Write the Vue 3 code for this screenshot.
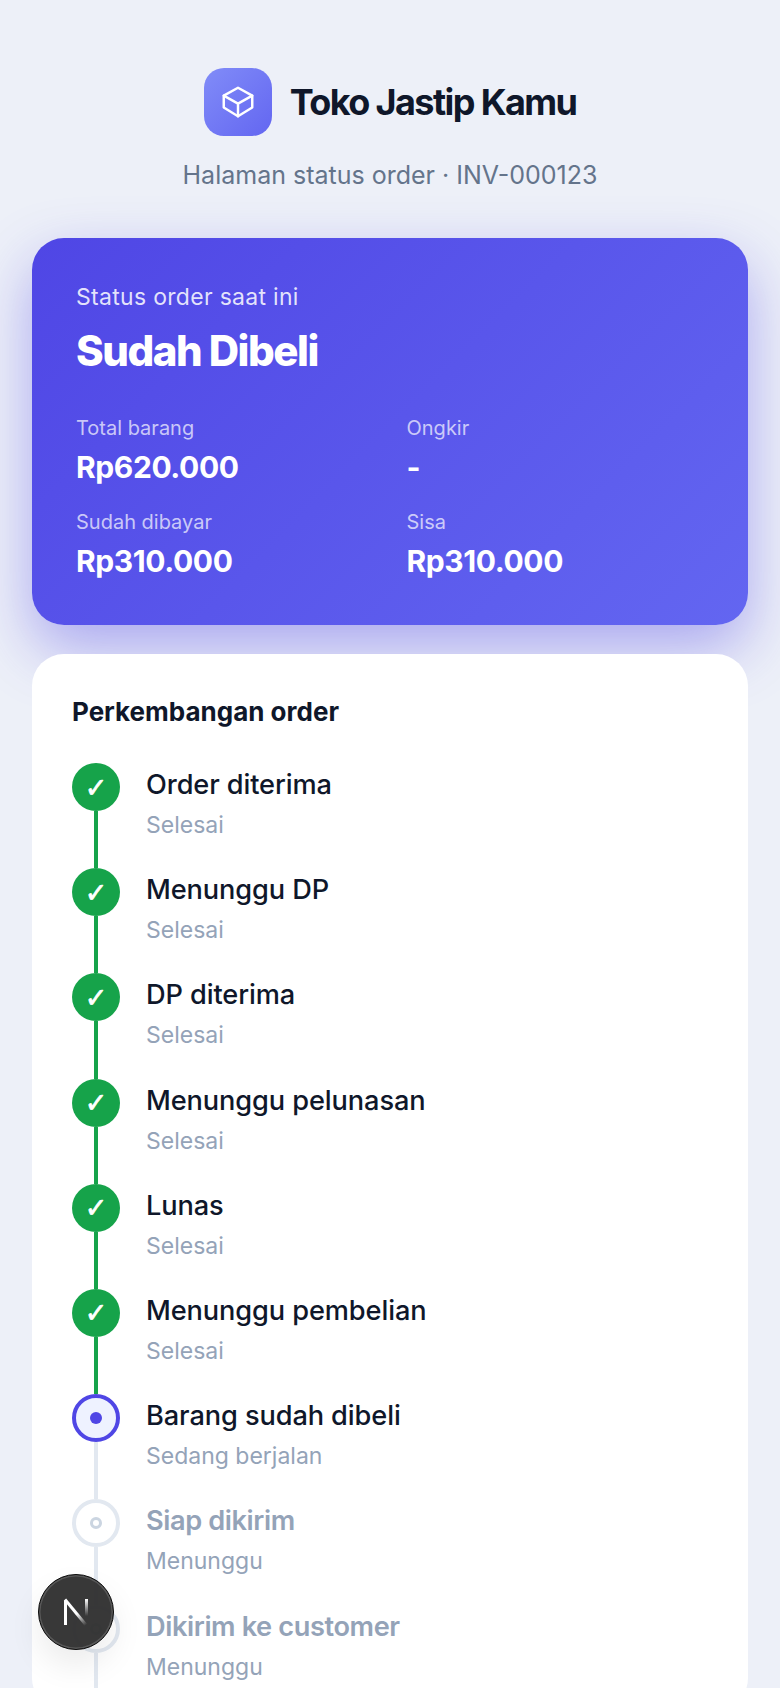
<template>
  <div class="page">
    <header class="brand">
      <div class="brand-row">
        <div class="logo">
          <svg width="38" height="38" viewBox="0 0 24 24" fill="none" stroke="#fff" stroke-width="1.55" stroke-linejoin="round" stroke-linecap="round">
            <path d="M12 3 21 8V15.5L12 21 3 15.5V8Z" />
            <path d="M3 8 12 13 21 8M12 13V21" />
          </svg>
        </div>
        <h1>Toko Jastip Kamu</h1>
      </div>
      <p class="subtitle">Halaman status order · INV-000123</p>
    </header>

    <section class="status-card">
      <p class="status-label">Status order saat ini</p>
      <h2>Sudah Dibeli</h2>
      <div class="stats">
        <div v-for="stat in stats" :key="stat.label" class="stat">
          <span class="stat-label">{{ stat.label }}</span>
          <strong>{{ stat.value }}</strong>
        </div>
      </div>
    </section>

    <section class="timeline-card">
      <h3>Perkembangan order</h3>
      <ol class="timeline">
        <li v-for="step in steps" :key="step.title" class="step" :class="step.state">
          <div class="marker">
            <span class="circle">
              <template v-if="step.state === 'done'">✓</template>
              <i v-else class="dot"></i>
            </span>
            <span class="line"></span>
          </div>
          <div class="step-text">
            <div class="step-title">{{ step.title }}</div>
            <div class="step-sub">{{ subLabel[step.state] }}</div>
          </div>
        </li>
      </ol>
    </section>

    <button class="dev-badge" type="button" aria-label="Next.js">
      <svg width="28" height="28" viewBox="0 0 28 28" fill="none" stroke-width="3">
        <defs>
          <linearGradient id="nDiag" x1="8" y1="6" x2="24" y2="27" gradientUnits="userSpaceOnUse">
            <stop offset="0.45" stop-color="#fff" />
            <stop offset="1" stop-color="#fff" stop-opacity="0" />
          </linearGradient>
          <linearGradient id="nRight" x1="24" y1="1" x2="24" y2="18" gradientUnits="userSpaceOnUse">
            <stop offset="0" stop-color="#fff" />
            <stop offset="1" stop-color="#fff" stop-opacity="0" />
          </linearGradient>
        </defs>
        <path d="M3.5 27V2.5" stroke="#fff" />
        <path d="M3 1.5 24 27" stroke="url(#nDiag)" />
        <path d="M24.5 1V18" stroke="url(#nRight)" />
      </svg>
    </button>
  </div>
</template>

<script setup>
const stats = [
  { label: 'Total barang', value: 'Rp620.000' },
  { label: 'Ongkir', value: '-' },
  { label: 'Sudah dibayar', value: 'Rp310.000' },
  { label: 'Sisa', value: 'Rp310.000' }
]

const subLabel = {
  done: 'Selesai',
  current: 'Sedang berjalan',
  waiting: 'Menunggu'
}

const steps = [
  { title: 'Order diterima', state: 'done' },
  { title: 'Menunggu DP', state: 'done' },
  { title: 'DP diterima', state: 'done' },
  { title: 'Menunggu pelunasan', state: 'done' },
  { title: 'Lunas', state: 'done' },
  { title: 'Menunggu pembelian', state: 'done' },
  { title: 'Barang sudah dibeli', state: 'current' },
  { title: 'Siap dikirim', state: 'waiting' },
  { title: 'Dikirim ke customer', state: 'waiting' }
]
</script>

<style>
html,
body {
  margin: 0;
  background: #edf0f8;
}
</style>

<style scoped>
.page {
  position: relative;
  height: 1688px;
  overflow: hidden;
  box-sizing: border-box;
  padding: 68px 32px 0;
  background: #edf0f8;
  font-family: Inter, "Noto Sans", sans-serif;
  color: #0f172a;
}

.brand {
  text-align: center;
}

.brand-row {
  display: flex;
  align-items: center;
  justify-content: center;
  gap: 18px;
}

.logo {
  width: 68px;
  height: 68px;
  border-radius: 20px;
  background: linear-gradient(135deg, #818cf8, #6366f1);
  display: flex;
  align-items: center;
  justify-content: center;
}

h1 {
  margin: 0;
  font-size: 36px;
  font-weight: 700;
  letter-spacing: -1.6px;
}

.subtitle {
  margin: 23px 0 0;
  font-size: 25px;
  line-height: 32px;
  color: #64748b;
}

.status-card {
  margin-top: 47px;
  height: 387px;
  box-sizing: border-box;
  padding: 45px 44px 0;
  border-radius: 32px;
  background: linear-gradient(135deg, #4f46e5, #6366f1);
  box-shadow: 0 24px 60px rgba(79, 70, 229, 0.42);
  color: #fff;
}

.status-label {
  margin: 0;
  font-size: 23px;
  line-height: 28px;
  letter-spacing: 0.3px;
  color: rgba(255, 255, 255, 0.85);
}

h2 {
  margin: 15px 0 0;
  font-size: 42px;
  line-height: 50px;
  font-weight: 800;
  letter-spacing: -1.5px;
}

.stats {
  display: grid;
  grid-template-columns: 1fr 1fr;
  column-gap: 33px;
  row-gap: 23px;
  margin-top: 39px;
}

.stat {
  display: flex;
  flex-direction: column;
  gap: 7px;
}

.stat-label {
  font-size: 20px;
  line-height: 26px;
  color: rgba(255, 255, 255, 0.7);
}

.stat strong {
  font-size: 30px;
  line-height: 38px;
  font-weight: 700;
  letter-spacing: -0.4px;
}

.timeline-card {
  margin-top: 29px;
  padding: 42px 40px 0;
  border-radius: 32px;
  background: #fff;
  position: relative;
}

h3 {
  margin: 0;
  font-size: 26px;
  line-height: 32px;
  font-weight: 700;
}

.timeline {
  list-style: none;
  margin: 35px 0 0;
  padding: 0;
}

.step {
  display: flex;
  gap: 26px;
  height: 105.2px;
}

.marker {
  width: 48px;
  display: flex;
  flex-direction: column;
  align-items: center;
}

.circle {
  flex: none;
  width: 48px;
  height: 48px;
  box-sizing: border-box;
  border-radius: 50%;
  display: flex;
  align-items: center;
  justify-content: center;
  font-family: "DejaVu Sans", sans-serif;
  font-size: 27px;
  font-weight: 700;
  color: #fff;
  -webkit-text-stroke: 0.7px #fff;
}

.line {
  flex: 1;
  width: 4px;
  background: #e2e8f0;
}

.done .circle,
.done .line {
  background: #16a34a;
}

.current .circle {
  background: #eef2ff;
  border: 4px solid #4f46e5;
}

.current .dot {
  width: 12px;
  height: 12px;
  border-radius: 50%;
  background: #4f46e5;
}

.waiting .circle {
  background: #fff;
  border: 4px solid #e2e8f0;
}

.waiting .dot {
  width: 12px;
  height: 12px;
  box-sizing: border-box;
  border-radius: 50%;
  border: 3px solid #cbd5e1;
}

.step-text {
  padding-top: 4px;
}

.step-title {
  font-size: 27.2px;
  line-height: 36px;
  font-weight: 500;
  letter-spacing: -0.1px;
}

.waiting .step-title {
  color: #94a3b8;
  font-weight: 600;
  letter-spacing: -0.4px;
}

.step-sub {
  margin-top: 7px;
  font-size: 23px;
  line-height: 30px;
  color: #94a3b8;
}

.dev-badge {
  position: absolute;
  left: 38px;
  top: 1574px;
  width: 76px;
  height: 76px;
  box-sizing: border-box;
  padding: 0;
  border-radius: 50%;
  border: 1.5px solid #0c0c0c;
  background: rgba(48, 48, 48, 0.96);
  box-shadow: inset 0 0 0 1.5px rgba(255, 255, 255, 0.16), 0 16px 32px rgba(0, 0, 0, 0.08);
  display: flex;
  align-items: center;
  justify-content: center;
}
</style>
